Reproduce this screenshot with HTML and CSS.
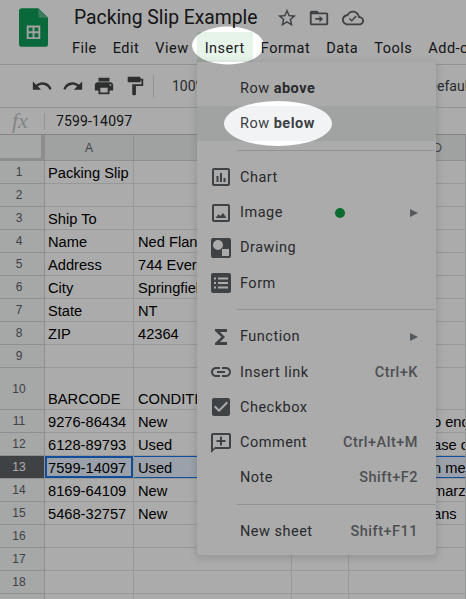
FILE: index.html
```html
<!DOCTYPE html>
<html lang="en">
<head>
  <meta charset="UTF-8">
  <meta name="viewport" content="width=device-width, initial-scale=1.0">
  <title>Packing Slip Example</title>
  <link rel="stylesheet" href="styles.css">
</head>
<body>

  <!-- Title and menu bar -->
  <header class="app-header">
    <svg class="logo" viewBox="0 0 30 40">
      <path d="M3 0H20L30 10V37a3 3 0 0 1-3 3H3a3 3 0 0 1-3-3V3a3 3 0 0 1 3-3z" fill="#0f9d58"/>
      <path d="M20 0L30 10H22a2 2 0 0 1-2-2z" fill="#57bb8a"/>
      <path d="M8 18H22V32H8zM10 20V24H14V20zM16 20V24H20V20zM10 26V30H14V26zM16 26V30H20V26z" fill="#f1f1f1" fill-rule="evenodd"/>
    </svg>
    <div class="header-main">
      <div class="title-row">
        <span class="doc-title">Packing Slip Example</span>
        <svg class="title-icon star" viewBox="0 0 24 24"><path d="M22 9.24l-7.19-.62L12 2 9.19 8.63 2 9.24l5.46 4.73L5.82 21 12 17.27 18.18 21l-1.63-7.03L22 9.24zM12 15.4l-3.76 2.27 1-4.28-3.32-2.88 4.38-.38L12 6.1l1.71 4.04 4.38.38-3.32 2.88 1 4.28L12 15.4z"/></svg>
        <svg class="title-icon folder" viewBox="0 0 24 24"><path d="M20 6h-8l-2-2H4c-1.1 0-2 .9-2 2v12c0 1.1.9 2 2 2h16c1.1 0 2-.9 2-2V8c0-1.1-.9-2-2-2zm0 12H4V8h16v10z"/><path d="M12.5 16.5l4-3.500-4-3.500v2.500H8v2h4.500z"/></svg>
        <svg class="title-icon" viewBox="0 0 24 24"><path d="M19.35 10.04C18.67 6.59 15.64 4 12 4 9.11 4 6.6 5.64 5.35 8.04 2.34 8.36 0 10.91 0 14c0 3.31 2.69 6 6 6h13c2.76 0 5-2.24 5-5 0-2.64-2.05-4.78-4.65-4.96zM19 18H6c-2.21 0-4-1.79-4-4 0-2.05 1.53-3.76 3.56-3.97l1.07-.11.5-.95C8.08 7.14 9.94 6 12 6c2.62 0 4.88 1.86 5.39 4.43l.3 1.5 1.53.11c1.56.1 2.78 1.41 2.78 2.96 0 1.65-1.35 3-3 3z"/><path d="M10.500 16l-3-3 1.100-1.100 1.900 1.900 4.400-4.400 1.100 1.100z"/></svg>
      </div>
      <nav class="menu-bar">
        <span class="menu-bar-item">File</span>
        <span class="menu-bar-item">Edit</span>
        <span class="menu-bar-item">View</span>
        <span class="menu-bar-item active">Insert</span>
        <span class="menu-bar-item">Format</span>
        <span class="menu-bar-item">Data</span>
        <span class="menu-bar-item">Tools</span>
        <span class="menu-bar-item">Add-ons</span>
      </nav>
    </div>
  </header>

  <!-- Toolbar -->
  <div class="toolbar">
    <span class="tool"><svg viewBox="0 0 24 24"><path d="M12.5 8c-2.65 0-5.05.99-6.9 2.6L2 7v9h9l-3.62-3.62c1.39-1.16 3.16-1.88 5.12-1.88 3.54 0 6.55 2.31 7.6 5.5l2.37-.78C21.08 11.03 17.15 8 12.5 8z"/></svg></span>
    <span class="tool"><svg viewBox="0 0 24 24"><path d="M18.4 10.6C16.55 8.99 14.15 8 11.5 8c-4.65 0-8.58 3.03-9.96 7.22L3.9 16c1.05-3.19 4.05-5.5 7.6-5.5 1.95 0 3.73.72 5.12 1.88L13 16h9V7l-3.6 3.6z"/></svg></span>
    <span class="tool"><svg viewBox="0 0 24 24"><path d="M19 8H5c-1.66 0-3 1.34-3 3v6h4v4h12v-4h4v-6c0-1.66-1.34-3-3-3zm-3 11H8v-5h8v5zm3-7c-.55 0-1-.45-1-1s.45-1 1-1 1 .45 1 1-.45 1-1 1zm-1-9H6v4h12V3z"/></svg></span>
    <span class="tool"><svg viewBox="0 0 24 24"><path d="M18 4V3c0-.55-.45-1-1-1H5c-.55 0-1 .45-1 1v4c0 .55.45 1 1 1h12c.55 0 1-.45 1-1V6h1v4H9v11c0 .55.45 1 1 1h2c.55 0 1-.45 1-1v-9h8V4h-3z"/></svg></span>
    <span class="tool-divider"></span>
    <span class="tool-text zoom-level">100%</span>
    <span class="tool-text font-name">Default</span>
  </div>

  <!-- Formula bar -->
  <div class="formula-bar">
    <span class="fx">fx</span>
    <span class="formula-divider"></span>
    <span class="formula-value">7599-14097</span>
  </div>

  <!-- Sheet -->
  <table class="sheet">
    <colgroup>
      <col class="col-head"><col class="col-a"><col class="col-b"><col class="col-c"><col class="col-d">
    </colgroup>
    <tr class="head-row"><th class="corner"></th><th>A</th><th>B</th><th>C</th><th class="head-d">D</th></tr>
    <tr><th>1</th><td>Packing Slip</td><td></td><td></td><td></td></tr>
    <tr><th>2</th><td></td><td></td><td></td><td></td></tr>
    <tr><th>3</th><td>Ship To</td><td></td><td></td><td></td></tr>
    <tr><th>4</th><td>Name</td><td>Ned Flanders</td><td></td><td></td></tr>
    <tr><th>5</th><td>Address</td><td>744 Evergreen</td><td></td><td></td></tr>
    <tr><th>6</th><td>City</td><td>Springfield</td><td></td><td></td></tr>
    <tr><th>7</th><td>State</td><td>NT</td><td></td><td></td></tr>
    <tr><th>8</th><td>ZIP</td><td>42364</td><td></td><td></td></tr>
    <tr><th>9</th><td></td><td></td><td></td><td></td></tr>
    <tr class="tall-row"><th>10</th><td>BARCODE</td><td>CONDITION</td><td></td><td></td></tr>
    <tr><th>11</th><td>9276-86434</td><td>New</td><td></td><td class="note">o end</td></tr>
    <tr><th>12</th><td>6128-89793</td><td>Used</td><td></td><td class="note">ase c</td></tr>
    <tr class="selected-row"><th>13</th><td class="active-cell">7599-14097</td><td>Used</td><td></td><td class="note">n me</td></tr>
    <tr><th>14</th><td>8169-64109</td><td>New</td><td></td><td class="note">marze</td></tr>
    <tr><th>15</th><td>5468-32757</td><td>New</td><td></td><td class="note">ans</td></tr>
    <tr><th>16</th><td></td><td></td><td></td><td></td></tr>
    <tr><th>17</th><td></td><td></td><td></td><td></td></tr>
    <tr><th>18</th><td></td><td></td><td></td><td></td></tr>
    <tr><th></th><td></td><td></td><td></td><td></td></tr>
  </table>

  <!-- Insert menu -->
  <div class="insert-menu">
    <div class="menu-item"><span class="menu-icon"></span><span class="menu-label">Row <b>above</b></span></div>
    <div class="menu-item hover"><span class="menu-icon"></span><span class="menu-label">Row <b>below</b></span></div>
    <div class="menu-sep"></div>
    <div class="menu-item">
      <svg class="menu-icon" viewBox="0 0 24 24"><path d="M19 3H5c-1.100 0-2 .9-2 2v14c0 1.100.9 2 2 2h14c1.100 0 2-.9 2-2V5c0-1.100-.9-2-2-2zm0 16H5V5h14v14z"/><path d="M7.500 11h2v6h-2zM11 8h2v9h-2zM14.500 13h2v4h-2z"/></svg>
      <span class="menu-label">Chart</span>
    </div>
    <div class="menu-item">
      <svg class="menu-icon" viewBox="0 0 24 24"><path d="M19 3H5c-1.100 0-2 .9-2 2v14c0 1.100.9 2 2 2h14c1.100 0 2-.9 2-2V5c0-1.100-.9-2-2-2zm0 16H5V5h14v14z"/><path d="M14 12l-2.700 3.100-1.800-1.800L6.500 17h11z"/></svg>
      <span class="menu-label">Image</span>
      <span class="new-dot"></span>
      <svg class="submenu-arrow" viewBox="0 0 8 8"><path d="M0 0L8 4L0 8z"/></svg>
    </div>
    <div class="menu-item">
      <svg class="menu-icon" viewBox="0 0 24 24"><path fill-rule="evenodd" d="M4 2H20a2 2 0 0 1 2 2V20a2 2 0 0 1-2 2H4a2 2 0 0 1-2-2V4a2 2 0 0 1 2-2zM13 13V20H20V13zM9 4a5 5 0 1 0 0 10a5 5 0 1 0 0-10z"/></svg>
      <span class="menu-label">Drawing</span>
    </div>
    <div class="menu-item">
      <svg class="menu-icon" viewBox="0 0 24 24"><path fill-rule="evenodd" d="M4 2H20a2 2 0 0 1 2 2V20a2 2 0 0 1-2 2H4a2 2 0 0 1-2-2V4a2 2 0 0 1 2-2zM5 6.500V8.500H7V6.500zM9 6.500V8.500H19V6.500zM5 11V13H7V11zM9 11V13H19V11zM5 15.500V17.500H7V15.500zM9 15.500V17.500H19V15.500z"/></svg>
      <span class="menu-label">Form</span>
    </div>
    <div class="menu-sep"></div>
    <div class="menu-item">
      <svg class="menu-icon" viewBox="0 0 24 24"><path d="M18 4H6v2l6.500 6L6 18v2h12v-3h-7l5-5-5-5h7z"/></svg>
      <span class="menu-label">Function</span>
      <svg class="submenu-arrow push" viewBox="0 0 8 8"><path d="M0 0L8 4L0 8z"/></svg>
    </div>
    <div class="menu-item">
      <svg class="menu-icon" viewBox="0 0 24 24"><path d="M3.900 12c0-1.710 1.390-3.100 3.100-3.100h4V7H7c-2.760 0-5 2.240-5 5s2.240 5 5 5h4v-1.900H7c-1.710 0-3.100-1.390-3.100-3.100zM8 13h8v-2H8v2zm9-6h-4v1.900h4c1.710 0 3.100 1.390 3.100 3.100s-1.390 3.100-3.100 3.100h-4V17h4c2.760 0 5-2.240 5-5s-2.240-5-5-5z"/></svg>
      <span class="menu-label">Insert link</span>
      <span class="shortcut">Ctrl+K</span>
    </div>
    <div class="menu-item">
      <svg class="menu-icon" viewBox="0 0 24 24"><path d="M19 3H5c-1.110 0-2 .9-2 2v14c0 1.100.89 2 2 2h14c1.110 0 2-.9 2-2V5c0-1.100-.89-2-2-2zm-9 14l-5-5 1.410-1.410L10 14.170l7.590-7.590L19 8l-9 9z"/></svg>
      <span class="menu-label">Checkbox</span>
    </div>
    <div class="menu-item">
      <svg class="menu-icon" viewBox="0 0 24 24"><path d="M20 2H4c-1.100 0-2 .9-2 2v18l4-4h14c1.100 0 2-.9 2-2V4c0-1.100-.9-2-2-2zm0 14H6l-2 2V4h16v12z"/><path d="M11 5.500h2V9h3.500v2H13v3.500h-2V11H7.500V9H11z"/></svg>
      <span class="menu-label">Comment</span>
      <span class="shortcut">Ctrl+Alt+M</span>
    </div>
    <div class="menu-item"><span class="menu-icon"></span><span class="menu-label">Note</span><span class="shortcut">Shift+F2</span></div>
    <div class="menu-sep"></div>
    <div class="menu-item"><span class="menu-icon"></span><span class="menu-label">New sheet</span><span class="shortcut">Shift+F11</span></div>
  </div>

  <!-- Grey layer with the two spotlights cut out -->
  <svg class="dim-layer" width="466" height="599" viewBox="0 0 466 599">
    <path fill-rule="evenodd" d="M0 0H466V599H0Z M192 45.500a36 19 0 1 0 72 0a36 19 0 1 0-72 0Z M224 123.500a54 22.500 0 1 0 108 0a54 22.500 0 1 0-108 0Z"/>
  </svg>

</body>
</html>
```

FILE: styles.css
```css
/* Page */
html, body {
  margin: 0;
  height: 100%;
  overflow: hidden;
}

body {
  position: relative;
  width: 466px;
  height: 599px;
  background-color: #fff;
  color: #202124;
  font-family: Roboto, "Liberation Sans", sans-serif;
}

/* Title and menu bar */
.app-header {
  box-sizing: border-box;
  display: flex;
  height: 65px;
  padding: 8px 0 0 19px;
  border-bottom: 1px solid #dadce0;
}

.logo {
  flex: none;
  width: 29px;
  height: 39px;
}

.header-main {
  flex: 1;
  min-width: 0;
  margin-left: 17px;
}

.title-row {
  display: flex;
  align-items: center;
  height: 20px;
  padding-left: 9px;
}

.doc-title {
  font-size: 19.3px;
  line-height: 20px;
  margin-right: 19px;
  white-space: nowrap;
}

.title-icon {
  flex: none;
  width: 22px;
  height: 22px;
  margin-right: 12px;
  fill: #5f6368;
}

.title-icon.star {
  margin-right: 10px;
}

.menu-bar {
  display: flex;
  margin: 4px 0 0 -1px;
  overflow: hidden;
  white-space: nowrap;
}

.menu-bar-item {
  flex: none;
  height: 30px;
  padding: 0 8px;
  font-size: 14.5px;
  letter-spacing: 0.5px;
  line-height: 33px;
  color: #202124;
}

.menu-bar-item.active {
  background-color: #e6f4ea;
}

/* Toolbar */
.toolbar {
  box-sizing: border-box;
  display: flex;
  align-items: center;
  height: 43px;
  padding: 0 0 0 26px;
  overflow: hidden;
  border-bottom: 1px solid #dadce0;
}

.tool {
  flex: none;
  display: flex;
  justify-content: center;
  width: 31px;
}

.tool svg {
  width: 22px;
  height: 22px;
  fill: #444746;
}

.tool-divider {
  flex: none;
  width: 1px;
  height: 22px;
  margin: 0 18px 0 3px;
  background-color: #dadce0;
}

.tool-text {
  flex: none;
  font-size: 14px;
  color: #3c4043;
  white-space: nowrap;
}

.font-name {
  margin-left: 222px;
}

/* Formula bar */
.formula-bar {
  box-sizing: border-box;
  display: flex;
  align-items: center;
  height: 27px;
  border-bottom: 1px solid #c4c4c4;
}

.fx {
  width: 44px;
  padding-left: 12px;
  box-sizing: border-box;
  font-family: "Liberation Serif", serif;
  font-size: 22px;
  font-style: italic;
  color: #c4c7c9;
}

.formula-divider {
  width: 1px;
  height: 17px;
  background-color: #dadce0;
}

.formula-value {
  margin-left: 11px;
  font-size: 14px;
  letter-spacing: 0.15px;
}

/* Sheet */
.sheet {
  table-layout: fixed;
  width: 466px;
  border-collapse: separate;
  border-spacing: 0;
}

.col-head { width: 45px; }
.col-a { width: 89px; }
.col-b { width: 158px; }
.col-c { width: 57px; }
.col-d { width: 117px; }

.sheet tr {
  height: 23px;
}

.sheet .tall-row {
  height: 42px;
}

.sheet .head-row {
  height: 26px;
}

.sheet th,
.sheet td {
  box-sizing: border-box;
  padding: 0;
  overflow: hidden;
  white-space: nowrap;
  border-right: 1px solid #e2e3e3;
  border-bottom: 1px solid #e2e3e3;
}

.sheet th {
  background-color: #f8f9fa;
  border-color: #d5d6d8;
  font-family: "Liberation Sans", sans-serif;
  font-size: 12px;
  font-weight: 400;
  color: #5f6368;
  text-align: center;
}

.sheet tr > th:first-child {
  padding-right: 6px;
}

.head-row th {
  background-color: #eff0f1;
}

.sheet .head-row .head-d {
  padding-left: 61px;
}

.sheet .corner {
  background-color: #f8f9fa;
  border-right: 4px solid #d2d3d5;
  border-bottom: 3px solid #d2d3d5;
}

.sheet td {
  padding: 0 3px 1px;
  vertical-align: bottom;
  font-family: "Liberation Sans", sans-serif;
  font-size: 14.67px;
  line-height: 18px;
  color: #000;
}

.sheet td:nth-child(3) {
  padding-left: 4px;
}

.sheet td.note {
  padding-left: 84px;
}

.selected-row td {
  background-color: #e8f0fe;
  box-shadow: inset 0 1px 0 #1a73e8, inset 0 -1px 0 #1a73e8;
}

.sheet .selected-row th {
  background-color: #5f6368;
  color: #fff;
}

.sheet .selected-row .active-cell {
  box-shadow: inset 0 0 0 2px #1a73e8;
}

/* Insert menu */
.insert-menu {
  position: absolute;
  top: 62px;
  left: 197px;
  box-sizing: border-box;
  width: 239px;
  height: 493px;
  padding-top: 8.6px;
  background-color: #fff;
  border-radius: 4px;
  box-shadow: 0 2px 6px 2px rgba(60, 64, 67, 0.15);
}

.menu-item {
  display: flex;
  align-items: center;
  height: 35.3px;
  padding: 0 18px 0 12px;
  font-size: 14.5px;
  letter-spacing: 0.5px;
  color: #3c4043;
  white-space: nowrap;
}

.menu-item.hover {
  background-color: #f1f3f4;
}

.menu-item b {
  font-weight: 700;
}

.menu-icon {
  flex: none;
  width: 24px;
  height: 24px;
  margin-right: 7px;
  fill: #5f6368;
}

.new-dot {
  flex: none;
  width: 10px;
  height: 10px;
  margin-left: auto;
  margin-right: 65px;
  border-radius: 50%;
  background-color: #14a046;
}

.submenu-arrow {
  flex: none;
  width: 8px;
  height: 8px;
  fill: #80868b;
}

.submenu-arrow.push {
  margin-left: auto;
}

.shortcut {
  margin-left: auto;
  font-weight: 500;
  color: #74787c;
}

.menu-sep {
  height: 1px;
  margin: 8.7px 1px 8.7px 40px;
  background-color: #dadce0;
}

/* Grey layer */
.dim-layer {
  position: absolute;
  top: 0;
  left: 0;
  fill: rgba(0, 0, 0, 0.33);
  pointer-events: none;
}
```
